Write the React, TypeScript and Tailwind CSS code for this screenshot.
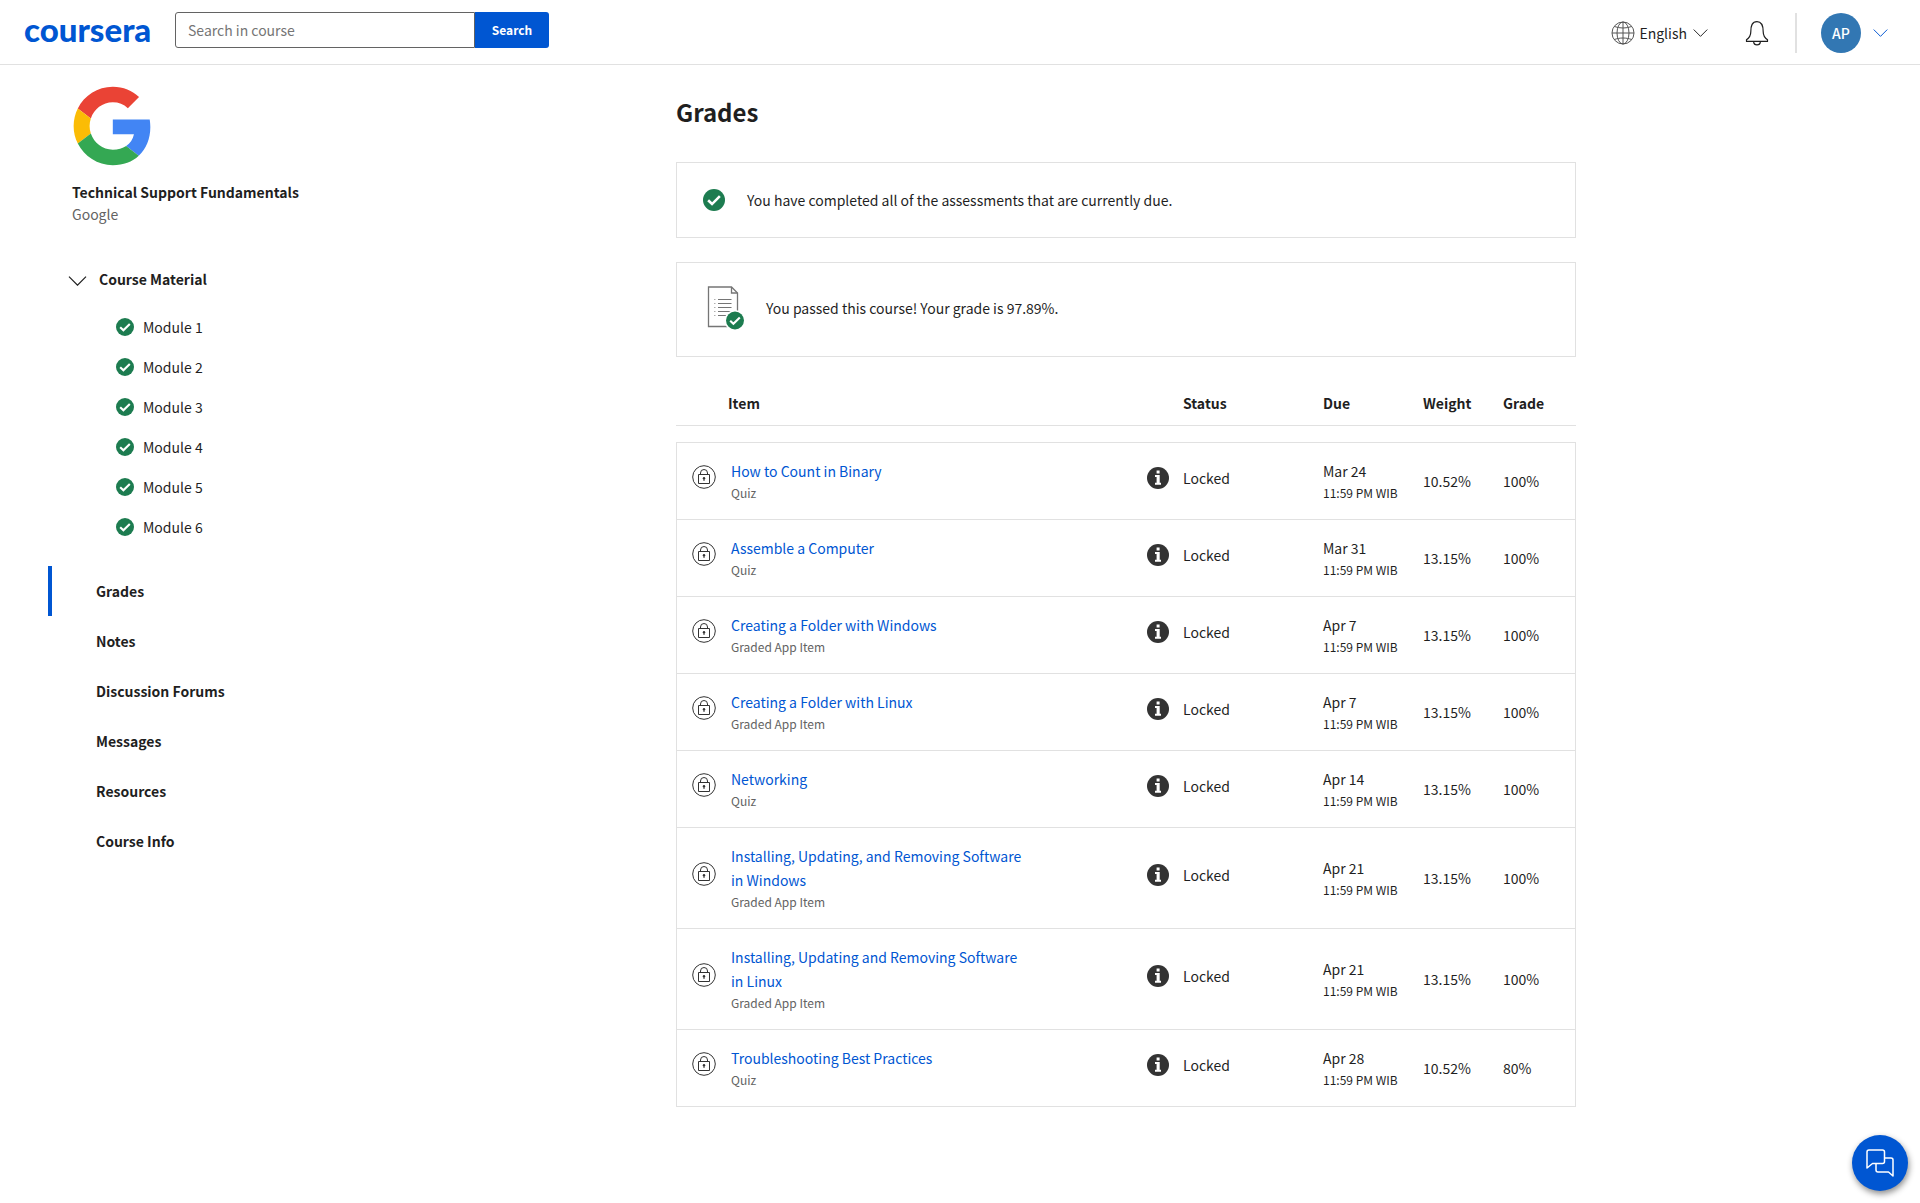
import React from "react";

const modules = ["Module 1", "Module 2", "Module 3", "Module 4", "Module 5", "Module 6"];
const links = ["Grades", "Notes", "Discussion Forums", "Messages", "Resources", "Course Info"];

type Item = { title: string; kind: string; due: string; weight: string; grade: string };

const items: Item[] = [
  { title: "How to Count in Binary", kind: "Quiz", due: "Mar 24", weight: "10.52%", grade: "100%" },
  { title: "Assemble a Computer", kind: "Quiz", due: "Mar 31", weight: "13.15%", grade: "100%" },
  { title: "Creating a Folder with Windows", kind: "Graded App Item", due: "Apr 7", weight: "13.15%", grade: "100%" },
  { title: "Creating a Folder with Linux", kind: "Graded App Item", due: "Apr 7", weight: "13.15%", grade: "100%" },
  { title: "Networking", kind: "Quiz", due: "Apr 14", weight: "13.15%", grade: "100%" },
  { title: "Installing, Updating, and Removing Software in Windows", kind: "Graded App Item", due: "Apr 21", weight: "13.15%", grade: "100%" },
  { title: "Installing, Updating and Removing Software in Linux", kind: "Graded App Item", due: "Apr 21", weight: "13.15%", grade: "100%" },
  { title: "Troubleshooting Best Practices", kind: "Quiz", due: "Apr 28", weight: "10.52%", grade: "80%" },
];

function CheckCircle({ className }: { className: string }) {
  return (
    <svg viewBox="0 0 18 18" className={className} aria-hidden="true">
      <circle cx="9" cy="9" r="9" fill="#1d7c50" />
      <path d="M4.2 9.2l3.2 3.1 6.4-6.4" fill="none" stroke="#fff" strokeWidth="2.1" />
    </svg>
  );
}

function Chevron({ className }: { className: string }) {
  return (
    <svg viewBox="0 0 18 10" className={className} fill="none" stroke="currentColor" aria-hidden="true">
      <path d="M.5.7L9 9.2 17.5.7" strokeWidth="1.2" />
    </svg>
  );
}

function GoogleLogo() {
  return (
    <svg viewBox="-1 -0.5 49 49" className="size-20" role="img" aria-label="Google">
      <path fill="#EA4335" d="M24 9.5c3.54 0 6.71 1.22 9.21 3.6l6.85-6.85C35.9 2.38 30.47 0 24 0 14.62 0 6.51 5.38 2.56 13.22l7.98 6.19C12.43 13.72 17.74 9.5 24 9.5z" />
      <path fill="#4285F4" d="M46.98 24.55c0-1.57-.15-3.09-.38-4.55H24v9.02h12.94c-.58 2.96-2.26 5.48-4.78 7.18l7.73 6c4.51-4.18 7.09-10.36 7.09-17.65z" />
      <path fill="#FBBC05" d="M10.53 28.59c-.48-1.45-.76-2.99-.76-4.59s.27-3.14.76-4.59l-7.98-6.19C.92 16.46 0 20.12 0 24c0 3.88.92 7.54 2.56 10.78l7.97-6.19z" />
      <path fill="#34A853" d="M24 48c6.48 0 11.93-2.13 15.89-5.81l-7.73-6c-2.15 1.45-4.92 2.3-8.16 2.3-6.26 0-11.57-4.22-13.47-9.91l-7.98 6.19C6.51 42.62 14.62 48 24 48z" />
    </svg>
  );
}

function Globe() {
  return (
    <svg viewBox="0 0 24 24" className="size-6" fill="none" stroke="#555" aria-hidden="true">
      <circle cx="12" cy="12" r="11" />
      <ellipse cx="12" cy="12" rx="6" ry="11" />
      <path d="M12 1v22M1 12h22M3.5 5.5c5 2 12 2 17 0M3.5 18.5c5-2 12-2 17 0" />
    </svg>
  );
}

function Bell() {
  return (
    <svg viewBox="0 0 24 26" className="h-[26px] w-6" fill="none" stroke="#1f1f1f" strokeWidth="1.2" aria-hidden="true">
      <path d="M1.5 21.4v-1.6c2.8-2 4.3-4.2 4.3-8.1C5.8 5.6 7.2 1.6 12 1.6s6.2 4 6.2 10.1c0 3.9 1.5 6.1 4.3 8.1v1.6z" strokeLinejoin="round" />
      <path d="M8.6 21.6c.2 2.2 1.5 3.3 3.4 3.3s3.2-1.1 3.4-3.3" />
    </svg>
  );
}

function ReportIcon() {
  return (
    <svg viewBox="0 0 38 44" className="h-11 w-[38px]" aria-hidden="true">
      <path d="M1.5 1h23l6 6v33.5h-29z" fill="#fff" stroke="#757575" strokeWidth="1.3" />
      <path d="M24.5 1v6h6" fill="none" stroke="#757575" strokeWidth="1.3" />
      <path d="M11 13.500h13.500M11 17.500h13.500M11 21.500h13.500M11 25.500h13.500M11 29.500h9" stroke="#757575" strokeWidth="1.2" />
      <path d="M7 13.500h1.500M7 17.500h1.500M7 21.500h1.500M7 25.500h1.500M7 29.500h1.500" stroke="#b0b0b0" strokeWidth="1.2" />
      <circle cx="28" cy="34.5" r="10.5" fill="#fff" />
      <circle cx="28" cy="34.5" r="9" fill="#1d7c50" />
      <path d="M23.200 34.700l3.200 3.100 6.400-6.400" fill="none" stroke="#fff" strokeWidth="2.1" />
    </svg>
  );
}

function LockIcon() {
  return (
    <svg viewBox="0 0 24 24" className="size-6" fill="none" stroke="#333" aria-label="Locked" role="img">
      <circle cx="12" cy="12" r="11.3" />
      <path d="M6.500 9.500h11v9h-11zM8.500 9.500V8a3.500 3.500 0 0 1 7 0v1.500" />
      <circle cx="12" cy="13.3" r="1.2" fill="#333" stroke="none" />
      <path d="M12 13.300v2.700" />
    </svg>
  );
}

function InfoIcon() {
  return (
    <svg viewBox="0 0 22 22" className="size-[22px] shrink-0" aria-hidden="true">
      <circle cx="11" cy="11" r="11" fill="#333" />
      <path d="M9.600 3.500h3v3h-3zM8 8h4.700v7.700H14v2H8v-2h1.600V10H8z" fill="#fff" />
    </svg>
  );
}

export default function App() {
  return (
    <div className="min-h-screen bg-white font-['Noto_Sans_CJK_SC','Noto_Sans',sans-serif] text-sm leading-6 text-[#1f1f1f]">
      <header className="flex h-[65px] items-start border-b border-[#e1e1e1] pl-6 pr-8">
        <a href="#home" aria-label="Coursera" className="w-[127px] pt-1 font-['Lato',sans-serif] text-[33px] leading-[50px] font-black text-[#0056d2]">
          coursera
        </a>
        <form className="ml-6 flex pt-3" role="search">
          <input
            type="text"
            aria-label="Search in course"
            placeholder="Search in course"
            className="h-9 w-[300px] rounded-l-[3px] border border-[#636363] px-3 placeholder:text-[#757575]"
          />
          <button type="button" className="h-9 w-[74px] rounded-r-[3px] bg-[#0056d2] text-xs font-bold text-white">
            Search
          </button>
        </form>
        <div className="ml-auto flex h-[65px] items-center">
          <button type="button" className="flex items-center gap-1">
            <Globe />
            <span className="mr-0.5">English</span>
            <Chevron className="h-2 w-[15px]" />
          </button>
          <button type="button" aria-label="Notifications" className="ml-[37px]">
            <Bell />
          </button>
          <span className="ml-[26px] h-10 w-0.5 bg-[#e1e1e1]" />
          <button type="button" className="ml-6 flex items-center gap-3 text-[#0056d2]" aria-label="Account">
            <span className="flex size-10 items-center justify-center rounded-full bg-[#3277b3] font-medium text-white">AP</span>
            <Chevron className="h-2 w-[15px]" />
          </button>
        </div>
      </header>

      <div className="flex">
        <aside className="w-[332px] shrink-0 pt-[21px]">
          <div className="pl-[72px]">
            <GoogleLogo />
            <p className="mt-[15px] leading-[22px] font-bold">Technical Support Fundamentals</p>
            <p className="leading-[22px] text-[#636363]">Google</p>
          </div>
          <button type="button" className="mt-[42px] ml-[68px] flex items-center gap-3 font-bold">
            <Chevron className="mt-1 h-2.5 w-[19px]" />
            Course Material
          </button>
          <ul className="mt-4 pl-[116px]">
            {modules.map((m) => (
              <li key={m}>
                <a href="#module" className="flex h-10 items-center gap-[9px]">
                  <CheckCircle className="size-[18px]" />
                  {m}
                </a>
              </li>
            ))}
          </ul>
          <nav className="mt-[19px] pl-12" aria-label="Course">
            {links.map((l, i) => (
              <a
                key={l}
                href="#section"
                className={`flex h-[50px] items-center border-l-4 pl-11 font-bold ${i === 0 ? "border-[#0056d2]" : "border-transparent"}`}
              >
                {l}
              </a>
            ))}
          </nav>
        </aside>

        <main className="flex flex-1 justify-center pb-24">
          <div className="w-full max-w-[900px]">
            <h1 className="mt-[29px] text-2xl leading-9 font-bold">Grades</h1>
            <section className="mt-8 flex h-[76px] items-center gap-[22px] border border-[#e1e1e1] px-[26px]">
              <CheckCircle className="size-[22px]" />
              <p>You have completed all of the assessments that are currently due.</p>
            </section>
            <section className="mt-6 flex h-[95px] items-center gap-[21px] border border-[#e1e1e1] px-[30px] pb-[3px]">
              <ReportIcon />
              <p>You passed this course! Your grade is 97.89%.</p>
            </section>

            <table className="mt-[34px] w-full table-fixed border-separate border-spacing-0 text-left">
              <colgroup>
                <col className="w-[55px]" />
                <col />
                <col className="w-[176px]" />
                <col className="w-[100px]" />
                <col className="w-20" />
                <col className="w-[73px]" />
              </colgroup>
              <thead>
                <tr className="h-[35px] align-top [&>th]:border-b [&>th]:border-[#e1e1e1]">
                  <th className="pl-[52px] whitespace-nowrap" colSpan={2}>
                    Item
                  </th>
                  <th className="pl-9">Status</th>
                  <th>Due</th>
                  <th>Weight</th>
                  <th>Grade</th>
                </tr>
                <tr className="h-4" aria-hidden="true">
                  <td colSpan={6} />
                </tr>
              </thead>
              <tbody className="[&_td]:border-t [&_td]:border-[#e1e1e1] [&_td:first-child]:border-l [&_td:last-child]:border-r [&>tr:last-child>td]:border-b">
                {items.map((it) => (
                  <tr key={it.title}>
                    <td className="pb-2 pl-[15px]">
                      <LockIcon />
                    </td>
                    <td className="py-4">
                      <a href="#item" className="block max-w-[300px] text-[#0056d2]">
                        {it.title}
                      </a>
                      <span className="block text-xs leading-5 text-[#636363]">{it.kind}</span>
                    </td>
                    <td className="pb-1.5">
                      <span className="flex items-center gap-3.5">
                        <InfoIcon />
                        Locked
                      </span>
                    </td>
                    <td>
                      {it.due}
                      <span className="block text-xs leading-5">11:59 PM WIB</span>
                    </td>
                    <td>{it.weight}</td>
                    <td>{it.grade}</td>
                  </tr>
                ))}
              </tbody>
            </table>
          </div>
        </main>
      </div>

      <button
        type="button"
        aria-label="Open chat"
        className="fixed right-3 bottom-3 flex size-14 items-center justify-center rounded-full bg-[#0056d2] shadow-[1px_3px_6px_rgba(0,0,0,0.45)]"
      >
        <svg viewBox="0 0 28 28" className="size-7" fill="none" stroke="#fff" strokeWidth="1.5" strokeLinejoin="round" aria-hidden="true">
          <path d="M3 1h13.500a2 2 0 0 1 2 2v9.500a2 2 0 0 1-2 2H6.500L1 19V3a2 2 0 0 1 2-2z" />
          <path d="M18.500 9H25a2 2 0 0 1 2 2v16l-4.500-4H12a2 2 0 0 1-2-2v-6" />
        </svg>
      </button>
    </div>
  );
}
